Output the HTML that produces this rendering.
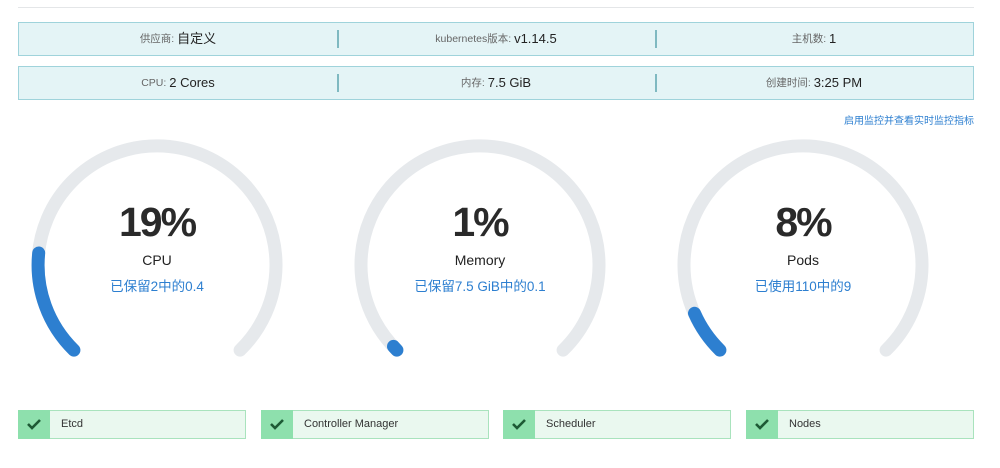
<!DOCTYPE html>
<html><head><meta charset="utf-8"><style>
*{margin:0;padding:0;box-sizing:border-box}
body{width:1000px;height:468px;background:#fff;font-family:"Liberation Sans","Noto Sans CJK SC",sans-serif;position:relative;overflow:hidden;color:#222}
.line{position:absolute;left:18px;top:7px;width:956px;height:1px;background:#e4e6e8}
.info{position:absolute;left:18px;width:956px;height:34px;background:#e4f4f6;border:1px solid #9fd3db;display:flex;align-items:center}
.info div{flex:1;text-align:center;font-size:13px;line-height:16px;color:#222;position:relative}
.info div span{font-size:10.5px;color:#666;vertical-align:1px}
.info div+div:before{content:"";position:absolute;left:0;top:-1px;width:2px;height:18px;background:#7fb9c1}
.link{position:absolute;right:26px;top:112px;font-size:10px;color:#2d7fd0}
.g{position:absolute;top:0;width:320px;text-align:center}
.pct{position:absolute;width:100%;top:199px;font-size:41px;font-weight:bold;color:#2a2a2a;letter-spacing:-2px}
.lab{position:absolute;width:100%;top:252px;font-size:14px;color:#222}
.sub{position:absolute;width:100%;top:275px;font-size:13.5px;color:#2d7fd0}
.st{position:absolute;top:410px;width:228px;height:29px;background:#eaf8ef;border:1px solid #a9e3bd;font-size:11px;color:#333}
.st i{position:absolute;left:-1px;top:-1px;width:32px;height:29px;background:#8ee0ad}
.st svg{position:absolute;left:8px;top:7px}
.st b{font-weight:normal;position:absolute;left:42px;top:7px}
</style></head><body>
<div class="line"></div>
<div class="info" style="top:22px"><div><span>供应商: </span>自定义</div><div><span>kubernetes版本: </span>v1.14.5</div><div><span>主机数: </span>1</div></div>
<div class="info" style="top:66px"><div><span>CPU: </span>2 Cores</div><div><span>内存: </span>7.5 GiB</div><div><span>创建时间: </span>3:25 PM</div></div>
<div class="link">启用监控并查看实时监控指标</div>
<svg style="position:absolute;left:0;top:0" width="1000" height="400">
<g fill="none" stroke-width="13" stroke-linecap="round">
<path d="M73.9 350.1 A119 119 0 1 1 240.1 350.1" stroke="#e6e9ec"/>
<path d="M73.9 350.1 A119 119 0 0 1 38.7 253" stroke="#2d7fd0"/>
<path d="M396.9 350.1 A119 119 0 1 1 563.1 350.1" stroke="#e6e9ec"/>
<path d="M396.9 350.1 A119 119 0 0 1 393.5 346.4" stroke="#2d7fd0"/>
<path d="M719.9 350.1 A119 119 0 1 1 886.1 350.1" stroke="#e6e9ec"/>
<path d="M719.9 350.1 A119 119 0 0 1 694.5 313.3" stroke="#2d7fd0"/>
</g></svg>
<div class="g" style="left:-3px"><div class="pct">19%</div><div class="lab">CPU</div><div class="sub">已保留2中的0.4</div></div>
<div class="g" style="left:320px"><div class="pct">1%</div><div class="lab">Memory</div><div class="sub">已保留7.5 GiB中的0.1</div></div>
<div class="g" style="left:643px"><div class="pct">8%</div><div class="lab">Pods</div><div class="sub">已使用110中的9</div></div>
<div class="st" style="left:18px"><i><svg width="16" height="14"><path d="M2 7 L6 11 L14 3" stroke="#1d5a35" stroke-width="2.6" fill="none"/></svg></i><b>Etcd</b></div>
<div class="st" style="left:261px"><i><svg width="16" height="14"><path d="M2 7 L6 11 L14 3" stroke="#1d5a35" stroke-width="2.6" fill="none"/></svg></i><b>Controller Manager</b></div>
<div class="st" style="left:503px"><i><svg width="16" height="14"><path d="M2 7 L6 11 L14 3" stroke="#1d5a35" stroke-width="2.6" fill="none"/></svg></i><b>Scheduler</b></div>
<div class="st" style="left:746px"><i><svg width="16" height="14"><path d="M2 7 L6 11 L14 3" stroke="#1d5a35" stroke-width="2.6" fill="none"/></svg></i><b>Nodes</b></div>
</body></html>
